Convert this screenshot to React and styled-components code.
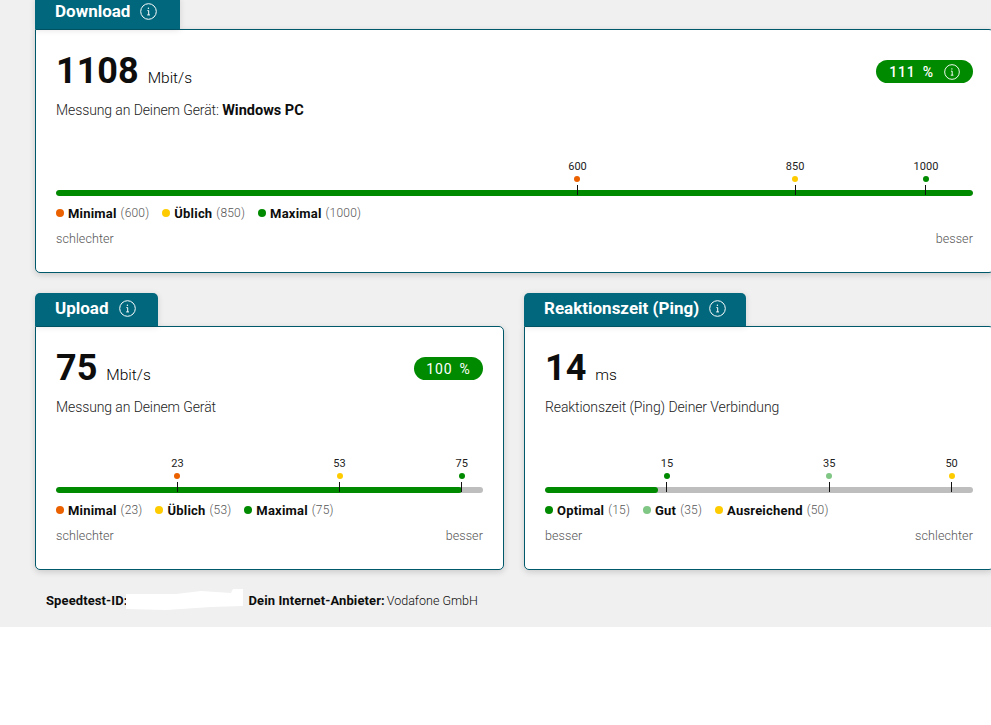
import React from 'react';
import styled, { createGlobalStyle } from 'styled-components';

const GlobalStyle = createGlobalStyle`
  html, body {
    margin: 0;
    padding: 0;
    background: #fff;
    overflow: hidden;
  }
  body {
    font-family: Roboto, "Liberation Sans", sans-serif;
    color: #0d0d0d;
  }
`;

const COLORS = {
  green: '#008a00',
  orange: '#eb6100',
  yellow: '#fecb00',
  light: '#80c684',
};

const Page = styled.div`
  width: 991px;
  height: 627px;
  background: #f0f0f0;
  overflow: hidden;
`;

const Grid = styled.div`
  width: 959px;
  margin: -4px 0 0 35px;
  display: grid;
  grid-template-columns: 469px 470px;
  column-gap: 20px;
  row-gap: 20px;
`;

const Section = styled.section`
  grid-column: ${(p) => (p.$wide ? '1 / -1' : 'auto')};
`;

const Tab = styled.div`
  display: inline-flex;
  align-items: center;
  gap: 10px;
  height: 33px;
  width: ${(p) => p.$w}px;
  box-sizing: border-box;
  padding: 0 0 3px 20px;
  background: #00677c;
  border-radius: 5px 5px 0 0;
  color: #fff;
  font-size: 17px;
  font-weight: 700;
  vertical-align: top;
  box-shadow: 0 1px 6px rgba(0, 0, 0, 0.12);
`;

const Card = styled.div`
  box-sizing: border-box;
  height: 244px;
  padding: 20px 20px 0 20px;
  background: #fff;
  border: 1px solid #00586b;
  border-radius: 0 5px 5px 5px;
  box-shadow: 0 2px 6px rgba(0, 0, 0, 0.16);
`;

const TopRow = styled.div`
  display: flex;
  justify-content: space-between;
  align-items: flex-start;
  height: 42px;
`;

const Value = styled.div`
  display: flex;
  align-items: baseline;
  gap: 9px;
  line-height: 42px;
`;

const Number = styled.span`
  font-size: 36px;
  font-weight: 700;
`;

const Unit = styled.span`
  font-size: 15.5px;
  font-weight: 300;
  color: #000;
`;

const Badge = styled.div`
  display: flex;
  align-items: center;
  justify-content: center;
  gap: 10px;
  width: ${(p) => p.$w}px;
  height: 23px;
  margin-top: 10px;
  border-radius: 12px;
  background: ${COLORS.green};
  color: #fff;
  font-size: 14px;
  font-weight: ${(p) => p.$weight};
  letter-spacing: 0.8px;
  word-spacing: 3px;
`;

const Description = styled.p`
  margin: 8px 0 0;
  height: 20px;
  font-size: 14px;
  line-height: 20px;
  font-weight: 300;
  letter-spacing: -0.1px;
  color: #222;

  b {
    font-size: 14.5px;
    line-height: 1;
    font-weight: 700;
    letter-spacing: 0;
    color: #0d0d0d;
  }
`;

const Gauge = styled.div`
  margin-top: 42px;
`;

const Marks = styled.div`
  position: relative;
  height: 28px;
`;

const Mark = styled.div`
  position: absolute;
  top: -2px;
  left: ${(p) => p.$at}%;
  width: 0;
  display: flex;
  flex-direction: column;
  align-items: center;
`;

const MarkLabel = styled.span`
  font-size: 11px;
  line-height: 14px;
  height: 14px;
  color: #222;
  white-space: nowrap;
`;

const MarkDot = styled.i`
  flex: none;
  width: 6px;
  height: 6px;
  margin-top: 2px;
  border-radius: 50%;
  background: ${(p) => p.$color};
`;

const Tick = styled.i`
  position: absolute;
  top: 25px;
  left: -0.5px;
  width: 1px;
  height: 10px;
  background: #111;
  z-index: 1;
`;

const Track = styled.div`
  height: 6px;
  border-radius: 3px;
  background: #bebebe;
  overflow: hidden;
`;

const Fill = styled.div`
  height: 100%;
  border-radius: 3px;
  background: ${COLORS.green};
`;

const Legend = styled.div`
  display: flex;
  gap: 13px;
  margin-top: 9px;
  height: 16px;
  align-items: center;
  font-size: 12px;
`;

const LegendItem = styled.span`
  display: inline-flex;
  align-items: center;
  gap: 4px;
  color: #555;
  font-weight: 300;
  letter-spacing: 0.2px;

  b {
    color: #0d0d0d;
    font-size: 13px;
    font-weight: 700;
  }
`;

const LegendDot = styled.i`
  width: 8px;
  height: 8px;
  border-radius: 50%;
  background: ${(p) => p.$color};
`;

const Scale = styled.div`
  display: flex;
  justify-content: space-between;
  margin-top: 10px;
  font-size: 12.5px;
  line-height: 16px;
  font-weight: 300;
  letter-spacing: 0.1px;
  color: #555;
`;

const Footer = styled.div`
  display: flex;
  align-items: center;
  height: 20px;
  margin: 20px 0 0 46px;
  font-size: 12.5px;

  b {
    font-size: 13px;
    font-weight: 700;
    letter-spacing: 0.1px;
  }
`;

const Redaction = styled.svg`
  flex: none;
  margin: 0 6px 0 -2px;
`;

const Provider = styled.span`
  margin-left: 2px;
  font-weight: 300;
`;

const InfoIcon = ({ size = 17 }) => (
  <svg width={size} height={size} viewBox="0 0 17 17" fill="none" stroke="#fff">
    <circle cx="8.5" cy="8.5" r="7.8" strokeWidth="1" />
    <path d="M7.4 7.6h1.3v4.2M7.2 11.9h2.8" strokeWidth="1" />
    <circle cx="8.4" cy="5.2" r="0.7" fill="#fff" stroke="none" />
  </svg>
);

const Meter = ({ fill, marks, legend, left, right }) => (
  <Gauge>
    <Marks>
      {marks.map((m) => (
        <Mark key={m.label} $at={m.at}>
          <MarkLabel>{m.label}</MarkLabel>
          <MarkDot $color={m.color} />
          <Tick />
        </Mark>
      ))}
    </Marks>
    <Track>
      <Fill style={{ width: `${fill}%` }} />
    </Track>
    <Legend>
      {legend.map((l) => (
        <LegendItem key={l.name}>
          <LegendDot $color={l.color} />
          <b>{l.name}</b>
          {l.value}
        </LegendItem>
      ))}
    </Legend>
    <Scale>
      <span>{left}</span>
      <span>{right}</span>
    </Scale>
  </Gauge>
);

const App = () => (
  <Page>
    <GlobalStyle />
    <Grid>
      <Section $wide>
        <Tab $w={145}>
          Download <InfoIcon />
        </Tab>
        <Card>
          <TopRow>
            <Value>
              <Number>1108</Number>
              <Unit>Mbit/s</Unit>
            </Value>
            <Badge $w={97} $weight={500}>
              111 % <InfoIcon size={16} />
            </Badge>
          </TopRow>
          <Description>
            Messung an Deinem Gerät: <b>Windows PC</b>
          </Description>
          <Meter
            fill={100}
            marks={[
              { label: '600', at: 56.87, color: COLORS.orange },
              { label: '850', at: 80.6, color: COLORS.yellow },
              { label: '1000', at: 94.87, color: COLORS.green },
            ]}
            legend={[
              { name: 'Minimal', value: '(600)', color: COLORS.orange },
              { name: 'Üblich', value: '(850)', color: COLORS.yellow },
              { name: 'Maximal', value: '(1000)', color: COLORS.green },
            ]}
            left="schlechter"
            right="besser"
          />
        </Card>
      </Section>

      <Section>
        <Tab $w={123}>
          Upload <InfoIcon />
        </Tab>
        <Card>
          <TopRow>
            <Value>
              <Number>75</Number>
              <Unit>Mbit/s</Unit>
            </Value>
            <Badge $w={69} $weight={400}>
              100 %
            </Badge>
          </TopRow>
          <Description>Messung an Deinem Gerät</Description>
          <Meter
            fill={95}
            marks={[
              { label: '23', at: 28.45, color: COLORS.orange },
              { label: '53', at: 66.4, color: COLORS.yellow },
              { label: '75', at: 95, color: COLORS.green },
            ]}
            legend={[
              { name: 'Minimal', value: '(23)', color: COLORS.orange },
              { name: 'Üblich', value: '(53)', color: COLORS.yellow },
              { name: 'Maximal', value: '(75)', color: COLORS.green },
            ]}
            left="schlechter"
            right="besser"
          />
        </Card>
      </Section>

      <Section>
        <Tab $w={222}>
          Reaktionszeit (Ping) <InfoIcon />
        </Tab>
        <Card>
          <TopRow>
            <Value>
              <Number>14</Number>
              <Unit>ms</Unit>
            </Value>
          </TopRow>
          <Description>Reaktionszeit (Ping) Deiner Verbindung</Description>
          <Meter
            fill={26.4}
            marks={[
              { label: '15', at: 28.5, color: COLORS.green },
              { label: '35', at: 66.4, color: COLORS.light },
              { label: '50', at: 95, color: COLORS.yellow },
            ]}
            legend={[
              { name: 'Optimal', value: '(15)', color: COLORS.green },
              { name: 'Gut', value: '(35)', color: COLORS.light },
              { name: 'Ausreichend', value: '(50)', color: COLORS.yellow },
            ]}
            left="besser"
            right="schlechter"
          />
        </Card>
      </Section>
    </Grid>
    <Footer>
      <b>Speedtest-ID:</b>
      <Redaction width="117" height="22" viewBox="0 0 117 22">
        <path d="M0 5 L50 5 L75 2 L105 4 L107 0 L117 0 L117 17 L85 18 L40 21 L0 20 Z" fill="#fff" />
      </Redaction>
      <b>Dein Internet-Anbieter:</b>
      <Provider>Vodafone GmbH</Provider>
    </Footer>
  </Page>
);

export default App;
